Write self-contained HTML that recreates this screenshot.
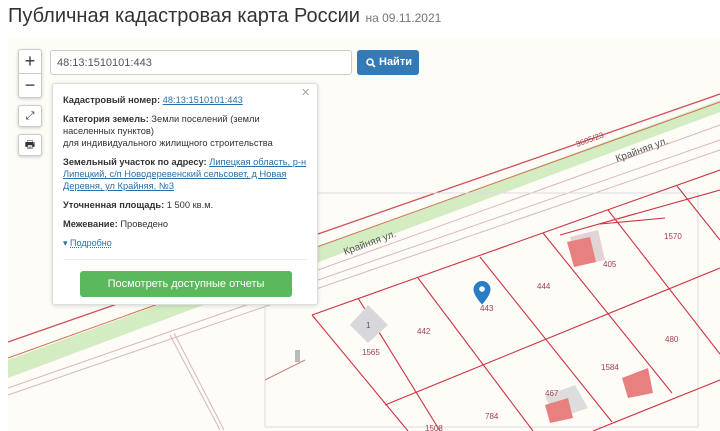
<!DOCTYPE html>
<html><head><meta charset="utf-8"><style>
*{box-sizing:border-box;margin:0;padding:0}
body{width:720px;height:431px;overflow:hidden;background:#fff;font-family:"Liberation Sans","Noto Sans CJK SC",sans-serif;position:relative}
h1{position:absolute;left:8px;top:5px;font-size:20px;font-weight:normal;color:#333;white-space:nowrap}
h1 small{font-size:12px;color:#777}
#map{position:absolute;left:8px;top:38px;width:712px;height:393px;background:#fdfcf7;overflow:hidden}
svg{position:absolute;left:0;top:0}
.zb{position:absolute;left:18px;width:24px;background:#fff;border:1px solid #ccc;border-radius:3px;box-shadow:0 1px 3px rgba(0,0,0,.2);text-align:center;color:#333}
.inp{position:absolute;left:50px;top:50px;width:302px;height:25px;border:1px solid #ccc;border-radius:3px;background:#fff;font-size:11px;color:#555;padding:6px 6px}
.btn{position:absolute;left:357px;top:50px;width:62px;height:25px;background:#337ab7;border-radius:3px;color:#fff;font-size:11px;font-weight:bold;padding:6px 0 0 22px}
.pop{position:absolute;left:52px;top:83px;width:266px;height:222px;background:#fff;border:1px solid #ddd;border-radius:3px;box-shadow:0 1px 4px rgba(0,0,0,.15);font-size:9.3px;color:#333;padding:10px 9px 10px 10px;line-height:12px}
.pop b{font-weight:bold}
.pop a{color:#2a6fa8;text-decoration:underline}
.pop p{margin-bottom:7px}
.green{position:absolute;left:27px;top:187px;width:212px;height:26px;background:#5cb85c;border-radius:3px;color:#fff;font-size:11px;text-align:center;line-height:26px}
</style></head><body>
<h1>Публичная кадастровая карта России <small>на 09.11.2021</small></h1>
<div id="map"></div>
<svg width="720" height="431" viewBox="0 0 720 431">
<g fill="none">
<polygon points="8,360 720,100 720,112 8,378" fill="#d4ecc2"/>
<line x1="8" y1="342" x2="720" y2="94" stroke="#d0505a" stroke-width="1.3"/>
<line x1="8" y1="358" x2="720" y2="102" stroke="#d07050" stroke-width="1"/>
<line x1="8" y1="388" x2="720" y2="140" stroke="#d8b8b8" stroke-width="1"/>
<line x1="8" y1="395" x2="720" y2="150" stroke="#d8b8b8" stroke-width="1"/>
<line x1="318" y1="270" x2="720" y2="125" stroke="#d8b8b8"/>
<line x1="318" y1="193" x2="698" y2="193" stroke="#ddd"/>
<line x1="698" y1="193" x2="698" y2="427" stroke="#ddd"/>
<line x1="265" y1="305" x2="265" y2="427" stroke="#ddd"/>
<line x1="265" y1="427" x2="698" y2="427" stroke="#ddd"/>
<line x1="170" y1="335" x2="220" y2="430" stroke="#d8b8b8"/>
<line x1="174" y1="333" x2="224" y2="430" stroke="#d8b8b8"/>
<line x1="265" y1="380" x2="305" y2="360" stroke="#d08080"/>
<rect x="295" y="350" width="5" height="12" fill="#bbb"/>
<g stroke="#cc3344" stroke-width="1.1">
<line x1="312" y1="315" x2="720" y2="170"/>
<line x1="560" y1="235" x2="720" y2="190"/>
<line x1="312" y1="315" x2="408" y2="431"/>
<line x1="358" y1="298" x2="440" y2="431"/>
<line x1="418" y1="278" x2="533" y2="431"/>
<line x1="480" y1="257" x2="612" y2="422"/>
<line x1="543" y1="233" x2="672" y2="393"/>
<line x1="608" y1="210" x2="720" y2="354"/>
<line x1="677" y1="186" x2="720" y2="240"/>
<line x1="385" y1="405" x2="720" y2="268"/>
<line x1="593" y1="431" x2="720" y2="380"/>
<line x1="600" y1="224" x2="665" y2="218"/>
</g>
<polygon points="350,325 368,305 388,325 368,343" fill="#d8d8dc"/>
<polygon points="570,237 598,230 605,260 578,266" fill="#e0d4d4"/>
<polygon points="567,242 590,237 596,262 574,267" fill="#e88080"/>
<polygon points="622,378 648,368 653,393 628,398" fill="#e88080"/>
<polygon points="545,396 575,385 588,408 556,419" fill="#ddd"/>
<polygon points="545,405 568,398 573,418 550,423" fill="#e88080"/>
</g>
<g font-family="Liberation Sans,sans-serif" font-size="8" fill="#a04050">
<text x="577" y="147" transform="rotate(-20 577 147)">3605/23</text>
<text x="480" y="311">443</text><text x="537" y="289">444</text><text x="603" y="267">405</text>
<text x="664" y="239">1570</text><text x="417" y="334">442</text><text x="362" y="355">1565</text>
<text x="665" y="342">480</text><text x="601" y="370">1584</text><text x="545" y="396">467</text>
<text x="485" y="419">784</text><text x="425" y="431">1508</text>
<text x="366" y="328" fill="#555">1</text>
</g>
<g font-family="Liberation Sans,sans-serif" font-size="10" fill="#555">
<text x="617" y="162" transform="rotate(-20 617 162)">Крайняя ул.</text>
<text x="345" y="255" transform="rotate(-20 345 255)">Крайняя ул.</text>
</g>
<path d="M482 281a8.5 8.5 0 0 1 8.5 8.5c0 6-8.5 15-8.5 15s-8.5-9-8.5-15a8.5 8.5 0 0 1 8.5-8.5z" fill="#2a7cc4"/>
<circle cx="482" cy="289" r="2.8" fill="#fff"/>
</svg>
<div class="zb" style="top:49px;height:49px;font-size:18px;line-height:23px">+<div style="border-top:1px solid #ccc;line-height:23px">−</div></div>
<div class="zb" style="top:105px;height:22px;font-size:11px;line-height:20px">⤢</div>
<div class="zb" style="top:134px;height:22px;font-size:11px;line-height:20px">🖶</div>
<div class="inp">48:13:1510101:443</div>
<div class="btn"><svg width="10" height="10" viewBox="0 0 10 10" style="left:9px;top:8px"><circle cx="4" cy="4" r="3" fill="none" stroke="#fff" stroke-width="1.6"/><line x1="6.2" y1="6.2" x2="9" y2="9" stroke="#fff" stroke-width="1.8"/></svg>Найти</div>
<div class="pop">
<span style="position:absolute;right:7px;top:3px;font-size:15px;color:#aaa">×</span>
<p><b>Кадастровый номер:</b> <a>48:13:1510101:443</a></p>
<p><b>Категория земель:</b> Земли поселений (земли населенных пунктов)<br>для индивидуального жилищного строительства</p>
<p><b>Земельный участок по адресу:</b> <a>Липецкая область, р-н Липецкий, с/п Новодеревенский сельсовет, д Новая Деревня, ул Крайняя, №3</a></p>
<p><b>Уточненная площадь:</b> 1 500 кв.м.</p>
<p><b>Межевание:</b> Проведено</p>
<p style="font-size:9px"><span style="color:#2a6fa8">▾</span> <a style="text-decoration:underline dotted">Подробно</a></p>
<div style="position:absolute;left:10px;right:10px;top:175px;border-top:1px solid #eee"></div>
<div class="green">Посмотреть доступные отчеты</div>
</div>
</body></html>
